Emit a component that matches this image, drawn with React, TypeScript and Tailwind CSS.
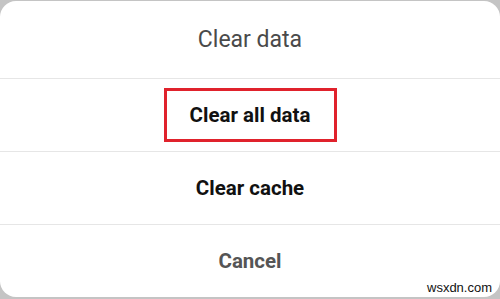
export default function App() {
  return (
    <div className="relative w-[500px] h-[299px] bg-[#c4c4c4] overflow-hidden pt-[1px]" style={{ fontFamily: "Roboto, 'Noto Sans', sans-serif" }}>
      <div className="h-[296px] bg-white rounded-[16px] flex flex-col">
        <div className="h-[78px] border-b border-[#e6e6e6] flex items-center justify-center">
          <span className="text-[23px] text-[#4a4a4a] leading-none">Clear data</span>
        </div>
        <div className="h-[73px] border-b border-[#e6e6e6] flex items-center justify-center">
          <div className="w-[173px] h-[54px] border-[3px] border-[#e0222c] flex items-center justify-center">
            <span className="text-[20.5px] font-bold text-[#111] leading-none">Clear all data</span>
          </div>
        </div>
        <div className="h-[73px] border-b border-[#e6e6e6] flex items-center justify-center">
          <span className="text-[20.5px] font-bold text-[#111] leading-none">Clear cache</span>
        </div>
        <div className="flex-1 flex items-center justify-center">
          <span className="text-[20.5px] font-bold text-[#555] leading-none">Cancel</span>
        </div>
      </div>
      <span className="absolute left-[427px] top-[281px] text-[13px] text-[#111] leading-none" style={{ fontFamily: "'Liberation Sans', Arial, sans-serif" }}>wsxdn.com</span>
    </div>
  );
}
